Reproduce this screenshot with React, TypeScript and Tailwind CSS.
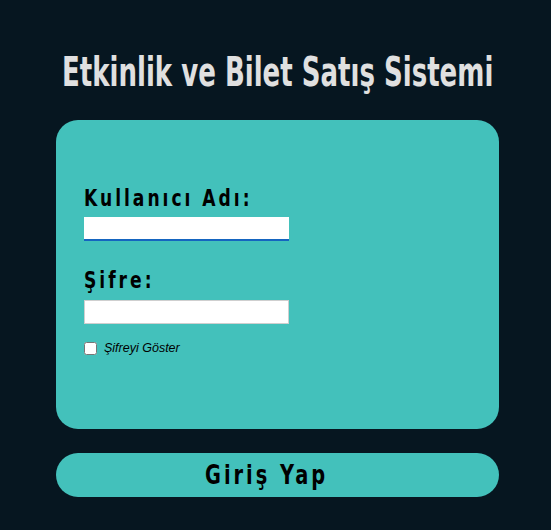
import { useState } from "react";

const heading = {
  fontFamily: '"DejaVu Sans", sans-serif',
};

export default function App() {
  const [show, setShow] = useState(false);

  return (
    <div className="min-h-[530px] w-full bg-[#061620] flex flex-col items-center pt-[50px] pl-[4px]">
      <h1
        className="text-[#e0e0e0] text-[41px] font-bold leading-[44px] whitespace-nowrap w-[443px] flex justify-center"
        style={heading}
      >
        <span className="inline-block scale-x-[0.635] origin-center">
          Etkinlik ve Bilet Satış Sistemi
        </span>
      </h1>

      <div className="mt-[26px] w-[443px] h-[309px] rounded-[22px] bg-[#43c1bb] px-[28px] pt-[64px]">
        <form className="flex flex-col" style={heading}>
          <label className="text-black text-[23px] font-bold leading-[28px] tracking-[4px] whitespace-nowrap">
            <span className="inline-block scale-x-[0.745] origin-left">Kullanıcı Adı:</span>
          </label>
          <input
            autoFocus
            type="text"
            className="mt-[5px] w-[205px] h-[24px] bg-white border-b-2 border-[#1565c0] outline-none px-1 text-sm"
          />
          <label className="mt-[25px] text-black text-[23px] font-bold leading-[28px] tracking-[4px] whitespace-nowrap">
            <span className="inline-block scale-x-[0.745] origin-left">Şifre:</span>
          </label>
          <input
            type={show ? "text" : "password"}
            className="mt-[6px] w-[205px] h-[24px] bg-white border border-[#cfcfcf] outline-none px-1 text-sm"
          />
          <label
            className="mt-[15px] flex items-center gap-[7px] text-black text-[12.5px] italic"
            style={{ fontFamily: '"Liberation Sans", Arial, sans-serif' }}
          >
            <input
              type="checkbox"
              checked={show}
              onChange={() => setShow(!show)}
              className="m-0 w-[13px] h-[13px]"
            />
            Şifreyi Göster
          </label>
        </form>
      </div>

      <button
        className="mt-[24px] w-[443px] h-[44px] rounded-full bg-[#43c1bb] text-black text-[26px] font-bold tracking-[4px] leading-none pr-[22px]"
        style={heading}
      >
        <span className="inline-block scale-x-[0.745] origin-center">Giriş Yap</span>
      </button>
    </div>
  );
}
